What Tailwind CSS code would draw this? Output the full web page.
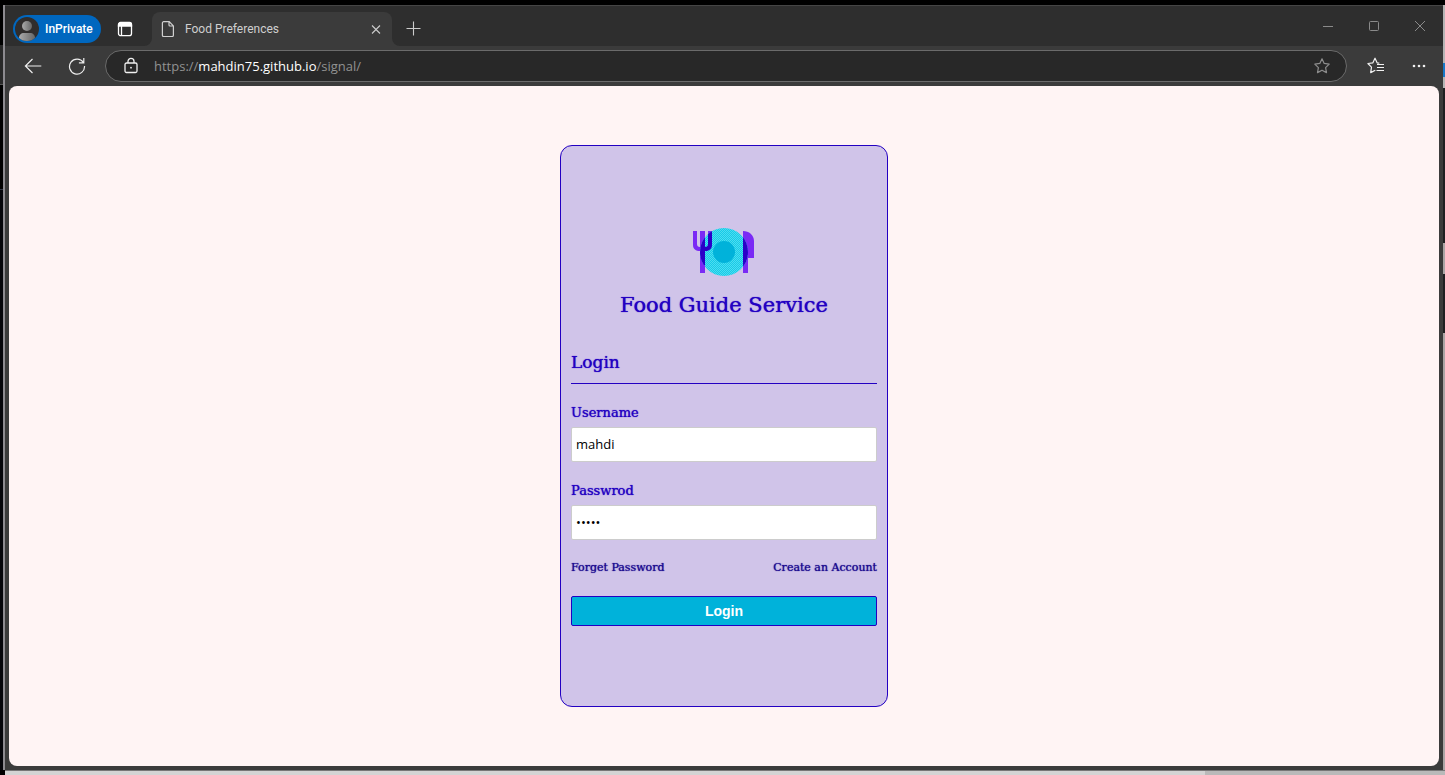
<!DOCTYPE html>
<html lang="en">
<head>
<meta charset="utf-8">
<meta name="viewport" content="width=device-width, initial-scale=1">
<title>Food Preferences</title>
<script src="https://cdn.jsdelivr.net/npm/@tailwindcss/browser@4"></script>
</head>
<body class="flex h-screen flex-col bg-black font-['Open_Sans','Noto_Sans',sans-serif]">
<div class="h-[5px] shrink-0 bg-black"></div>
<div class="flex min-h-0 flex-1">
  <!-- desktop visible left of the window -->
  <div class="flex w-[3px] shrink-0 flex-col">
    <div class="h-10 bg-black"></div>
    <div class="h-10 border-b border-[#555] bg-[#292929]"></div>
    <div class="h-[105px] border-b border-[#333845] bg-black"></div>
    <div class="flex-1 bg-[#05050a]"></div>
  </div>
  <div class="w-[2px] shrink-0 bg-[#8d8b90]"></div>

  <div class="flex min-w-0 flex-1 flex-col border-t border-[#454545] bg-[#3b3b3b]">
    <header class="shrink-0">
      <div class="flex h-10">
        <div class="flex w-[147px] items-center rounded-br-lg bg-[#2e2e2e] pt-[6px] pl-2">
          <button class="flex h-7 w-22 items-center gap-[6px] rounded-full bg-[#0067bf] pl-[2px] font-[Roboto,sans-serif] text-[12px] leading-4 font-medium text-white">
            <svg class="size-6 shrink-0" viewBox="0 0 24 24" aria-hidden="true">
              <defs>
                <linearGradient id="person" x1="0" x2="1"><stop offset="0" stop-color="#aaa"/><stop offset="1" stop-color="#666"/></linearGradient>
                <clipPath id="avatar"><circle cx="12" cy="12" r="12"/></clipPath>
              </defs>
              <circle cx="12" cy="12" r="12" fill="#302d2c"/>
              <g clip-path="url(#avatar)" fill="url(#person)"><circle cx="12" cy="9" r="5"/><path d="M4 24v-3c0-3 2-5 5-5h6c3 0 5 2 5 5v3z"/></g>
            </svg>
            InPrivate
          </button>
          <button class="ml-4 size-4" aria-label="Tab actions">
            <svg viewBox="0 0 16 16" fill="none" stroke="#fff" stroke-width="1.3"><rect x="1.5" y="1.7" width="13" height="13" rx="2.3"/><path d="M1.5 4V3.5a2 2 0 0 1 2-2h9a2 2 0 0 1 2 2V5h-13z" fill="#fff"/><path d="M4.5 5v9.5"/></svg>
          </button>
        </div>
        <div class="w-60 bg-[#2e2e2e] pt-[6px]">
          <div class="flex h-full items-center rounded-t-lg bg-[#3b3b3b] pr-2 pl-2">
            <svg class="size-4 shrink-0" viewBox="0 0 16 16" fill="none" stroke="#d0d0d0" stroke-width="1.2" aria-hidden="true"><path d="M3.7.7h5.5l4.2 4.2v9.3a1.3 1.3 0 0 1-1.3 1.3H3.7a1.3 1.3 0 0 1-1.3-1.3V2A1.3 1.3 0 0 1 3.7.7zM9 .8V4a1 1 0 0 0 1 1h3.3"/></svg>
            <span class="ml-[9px] flex-1 font-[Roboto,sans-serif] text-[12px] leading-4 text-[#cfcfcf]">Food Preferences</span>
            <button class="size-4" aria-label="Close tab"><svg viewBox="0 0 16 16" stroke="#ccc" stroke-width="1.1"><path d="M4 4.5l8 8M12 4.5l-8 8"/></svg></button>
          </div>
        </div>
        <div class="flex flex-1 items-center rounded-bl-lg bg-[#2e2e2e] pl-[14px]">
          <button class="mt-[6px] size-4" aria-label="New tab"><svg viewBox="0 0 16 16" stroke="#ccc" stroke-width="1.1"><path d="M.5 7.5h14M7.5.5v14"/></svg></button>
          <div class="ml-auto flex h-full items-center gap-[30px] pr-[15px]">
            <button class="size-4" aria-label="Minimize"><svg viewBox="0 0 16 16" stroke="#8a8a8a"><path d="M3 8.5h10"/></svg></button>
            <button class="size-4" aria-label="Maximize"><svg viewBox="0 0 16 16" fill="none" stroke="#8a8a8a"><rect x="3.500" y="3.500" width="9" height="9" rx="1"/></svg></button>
            <button class="size-4" aria-label="Close"><svg viewBox="0 0 16 16" stroke="#8a8a8a"><path d="M3 3l10 10M13 3L3 13"/></svg></button>
          </div>
        </div>
      </div>
      <div class="flex h-10 items-center pr-4 pl-[19px] text-white">
        <button class="size-[18px]" aria-label="Back"><svg viewBox="0 0 18 18" fill="none" stroke="#eee" stroke-width="1.2"><path d="M17.300 9H1.500M8.500 2L1.400 9l7.100 7"/></svg></button>
        <button class="ml-[26px] size-[18px]" aria-label="Refresh"><svg viewBox="0 0 18 18" fill="none" stroke="#eee" stroke-width="1.200"><path d="M15.300 5.500A7.500 7.500 0 1 0 16.500 9M15.800 1v4.900h-4.900"/></svg></button>
        <div class="ml-[19px] flex h-8 flex-1 items-center rounded-full border border-[#6b6b6b] bg-[#282828] pr-4 pl-4">
          <svg class="size-[18px] shrink-0" viewBox="0 0 18 18" fill="none" stroke="#f0f0f0" stroke-width="1.3" aria-hidden="true"><rect x="3" y="6" width="12" height="9.500" rx="1.500"/><path d="M6 6V4.300a3 3 0 0 1 6 0V6"/><circle cx="9" cy="10.700" r=".9" fill="#f0f0f0" stroke="none"/></svg>
          <a href="#" class="ml-[14px] flex-1 text-[13px] leading-5 text-[#929292]">https://<span class="text-white">mahdin75.github.io</span>/signal/</a>
          <button class="size-4" aria-label="Add to favorites"><svg viewBox="0 0 16 16" fill="none" stroke="#8d8d8d" stroke-width="1.2" stroke-linejoin="round"><path d="M8 .8l2.200 4.600 5 .7-3.600 3.500.9 5L8 12.200l-4.500 2.400.9-5L.8 6.100l5-.7z"/></svg></button>
        </div>
        <button class="ml-5 size-[18px]" aria-label="Favorites"><svg viewBox="0 0 18 18" fill="none" stroke="#f2f2f2" stroke-width="1.2" stroke-linejoin="round"><path d="M12.300 6.200l-2.200-.4L8 1.200 5.900 5.800.9 6.500l3.600 3.600-.8 5.500 4.600-2.400M10 7.500h7M10 10.500h7M9.500 13.500H17"/></svg></button>
        <button class="ml-[26px] size-4" aria-label="Settings and more"><svg viewBox="0 0 16 16" fill="#f0f0f0"><circle cx="3" cy="8" r="1.300"/><circle cx="8" cy="8" r="1.300"/><circle cx="13" cy="8" r="1.300"/></svg></button>
      </div>
    </header>

    <main class="mx-1 mb-1 flex flex-1 items-center justify-center rounded-lg bg-[#fff4f4]">
      <form class="flex w-82 flex-col rounded-xl border border-[#2300c2] bg-[#d0c4e9] px-[10px] pt-[82px] pb-20 font-['DejaVu_Serif',serif] text-[#2300c2]">
        <svg class="h-12 w-16 self-center" viewBox="0 0 64 48" role="img" aria-label="Plate with fork and knife">
          <defs>
            <pattern id="weave" width="2" height="2" patternUnits="userSpaceOnUse"><path fill="#16cbe8" d="M0 0h2v2H0z"/><path fill="#4ddcf0" d="M0 0h1v1H0zM1 1h1v1H1z"/></pattern>
            <clipPath id="plate"><circle cx="32" cy="24" r="24"/></clipPath>
            <g id="cutlery">
              <path d="M1 3h4v13c0 2 1 3 3 3V3h5v16c2 0 3-1 3-3V3h4v14c0 4-3 6-7 6v22H8V23c-4 0-7-2-7-6z"/>
              <path d="M51 3c6 0 11 4 11 10v17h-6v15h-5z"/>
            </g>
          </defs>
          <use href="#cutlery" fill="#7a2af5"/>
          <circle cx="32" cy="24" r="24" fill="url(#weave)"/>
          <use href="#cutlery" fill="#2b00c8" clip-path="url(#plate)"/>
          <path d="M8 37h5v8H8zM51 39h5v6h-5z" fill="#7a2af5"/>
          <circle cx="32" cy="24" r="11" fill="#00b2da"/>
        </svg>
        <h1 class="mt-3 text-center text-[21px] leading-[34px] [text-shadow:0_0_1px_#2300c2]">Food Guide Service</h1>
        <h2 class="mt-[26px] border-b border-[#2300c2] pb-[7px] text-[17px] leading-7 [text-shadow:0_0_1px_#2300c2]">Login</h2>
        <label for="username" class="mt-[19px] text-[13px] leading-5 [text-shadow:0_0_1px_#2300c2]">Username</label>
        <input id="username" type="text" value="mahdi" class="mt-1 h-[35px] w-full rounded-[2px] border border-[#cccccc] bg-white px-1 pb-[2px] font-['Open_Sans',sans-serif] text-[13px] text-black outline-none">
        <label for="password" class="mt-[19px] text-[13px] leading-5 [text-shadow:0_0_1px_#2300c2]">Passwrod</label>
        <input id="password" type="password" value="mahdi" class="mt-1 h-[35px] w-full rounded-[2px] border border-[#cccccc] bg-white px-1 pb-[2px] font-['Open_Sans',sans-serif] text-[13px] text-black outline-none">
        <div class="mt-5 flex justify-between text-[11px] leading-4 text-[#1a0a90] [text-shadow:0_0_1px_#1a0a90]">
          <a href="#">Forget Password</a>
          <a href="#">Create an Account</a>
        </div>
        <button type="button" class="mt-5 h-[30px] w-full rounded-[2px] border border-[#2300c2] bg-[#00b2da] font-['Liberation_Sans',Arial,sans-serif] text-[14px] leading-5 font-bold text-white">Login</button>
      </form>
    </main>
  </div>

  <!-- desktop visible right of the window -->
  <div class="flex w-[2px] shrink-0 flex-col bg-[#aaa5a5]">
    <div class="h-[58px] bg-[#b5b5b5]"></div>
    <div class="h-[14px] bg-[#1979c9]"></div>
    <div class="h-[11px] bg-[#b5b5b5]"></div>
    <div class="h-[155px] bg-[#1f2022]"></div>
    <div class="h-[31px] bg-[#aaa5a5]"></div>
    <div class="h-[59px] bg-[#1f2022]"></div>
  </div>
</div>
<div class="flex h-[5px] shrink-0 pl-[5px]">
  <div class="flex-[5] border-t border-[#777] bg-[#d4d4d4]"></div>
  <div class="flex-1 border-t border-[#777] bg-[#b9b9b9]"></div>
</div>
</body>
</html>
